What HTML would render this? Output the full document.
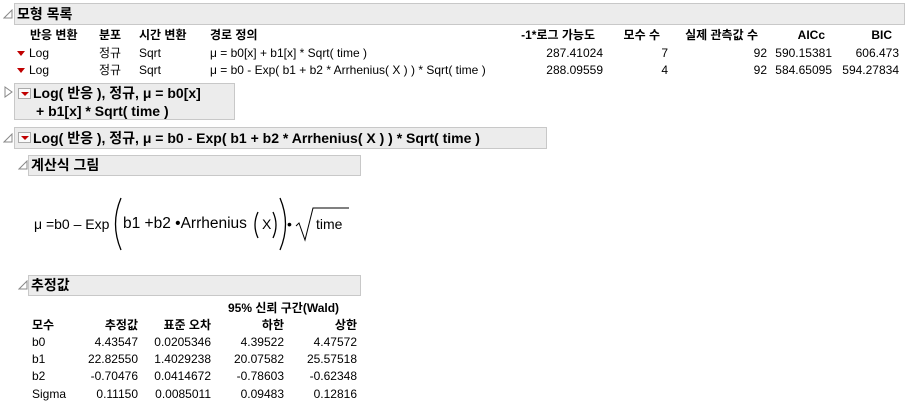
<!DOCTYPE html>
<html><head><meta charset="utf-8"><style>
body{margin:0;width:906px;height:404px;background:#fff;position:relative;overflow:hidden;font-family:"Liberation Sans","Noto Sans CJK KR",sans-serif;font-size:12px;color:#000}
.a{position:absolute;white-space:nowrap;line-height:14px}
.r{text-align:right}
.b{font-weight:bold}
.box{position:absolute;background:#ececec;border:1px solid #c8c8c8;box-sizing:border-box}
.h{font-size:14px;font-weight:bold;line-height:18px}
.tri{position:absolute;width:0;height:0;border-left:4px solid transparent;border-right:4px solid transparent;border-top:5px solid #c00000}
.dd{position:absolute;width:13px;height:11px;border:1px solid #aaa;background:#fafafa;box-sizing:border-box}
.dd:after{content:"";position:absolute;left:2px;top:3px;border-left:4px solid transparent;border-right:4px solid transparent;border-top:4px solid #c00000}
.f{position:absolute;white-space:nowrap;font-size:14px;line-height:18px;top:215px}
</style></head><body>
<svg class="a" style="left:3px;top:9px" width="10" height="10"><path d="M9 1 L9 9 L1 9 Z" fill="none" stroke="#888"/></svg>
<div class="box" style="left:14px;top:3px;width:891px;height:22px"></div>
<span class="a h" style="left:17px;top:5px">모형 목록</span>
<span class="a b" style="left:30px;top:28px">반응 변환</span>
<span class="a b" style="left:99px;top:28px">분포</span>
<span class="a b" style="left:139px;top:28px">시간 변환</span>
<span class="a b" style="left:210px;top:28px">경로 정의</span>
<span class="a b r" style="right:311px;top:28px">-1*로그 가능도</span>
<span class="a b r" style="right:246px;top:28px">모수 수</span>
<span class="a b r" style="right:148px;top:28px">실제 관측값 수</span>
<span class="a b r" style="right:81px;top:28px">AICc</span>
<span class="a b r" style="right:14px;top:28px">BIC</span>
<div class="tri" style="left:17px;top:51px"></div>
<span class="a" style="left:29px;top:46px">Log</span><span class="a" style="left:99px;top:46px">정규</span><span class="a" style="left:139px;top:46px">Sqrt</span><span class="a" style="left:210px;top:46px">μ = b0[x] + b1[x] * Sqrt( time )</span>
<span class="a r" style="right:303px;top:46px">287.41024</span><span class="a r" style="right:238px;top:46px">7</span><span class="a r" style="right:139px;top:46px">92</span><span class="a r" style="right:74px;top:46px">590.15381</span><span class="a r" style="right:7px;top:46px">606.473</span>
<div class="tri" style="left:17px;top:68px"></div>
<span class="a" style="left:29px;top:63px">Log</span><span class="a" style="left:99px;top:63px">정규</span><span class="a" style="left:139px;top:63px">Sqrt</span><span class="a" style="left:210px;top:63px">μ = b0 - Exp( b1 + b2 * Arrhenius( X ) ) * Sqrt( time )</span>
<span class="a r" style="right:303px;top:63px">288.09559</span><span class="a r" style="right:238px;top:63px">4</span><span class="a r" style="right:139px;top:63px">92</span><span class="a r" style="right:74px;top:63px">584.65095</span><span class="a r" style="right:7px;top:63px">594.27834</span>
<svg class="a" style="left:4px;top:86px" width="10" height="12"><path d="M1 1 L8 6 L1 11 Z" fill="none" stroke="#888"/></svg>
<div class="box" style="left:14px;top:83px;width:221px;height:37px"></div>
<div class="dd" style="left:18px;top:88px"></div>
<span class="a h" style="left:33px;top:84px">Log( 반응 ), 정규, μ = b0[x]</span>
<span class="a h" style="left:36px;top:102px">+ b1[x] * Sqrt( time )</span>
<svg class="a" style="left:3px;top:133px" width="10" height="10"><path d="M9 1 L9 9 L1 9 Z" fill="none" stroke="#888"/></svg>
<div class="box" style="left:14px;top:127px;width:533px;height:22px"></div>
<div class="dd" style="left:18px;top:132px"></div>
<span class="a h" style="left:33px;top:129px">Log( 반응 ), 정규, μ = b0 - Exp( b1 + b2 * Arrhenius( X ) ) * Sqrt( time )</span>
<svg class="a" style="left:18px;top:160px" width="10" height="10"><path d="M9 1 L9 9 L1 9 Z" fill="none" stroke="#888"/></svg>
<div class="box" style="left:28px;top:155px;width:333px;height:21px"></div>
<span class="a h" style="left:31px;top:156px">계산식 그림</span>
<div class="f" style="left:34px">μ =b0 – Exp</div>
<svg class="a" style="left:0;top:0" width="906" height="404"><g fill="none" stroke="#000" stroke-width="1.3">
<path d="M121 198 Q110 224 121 250"/><path d="M258 212 Q252 225 258 238"/><path d="M273 212 Q279 225 273 238"/><path d="M280 198 Q291 224 280 250"/>
<path d="M296 226 L299 223 L305 240 L313 208 L349 208" stroke-width="1"/></g></svg>
<div class="f" style="left:123px;font-size:15.5px">b1 +b2 •Arrhenius</div>
<div class="f" style="left:262px">X</div>
<div class="f" style="left:287px">•</div>
<div class="f" style="left:316px">time</div>
<svg class="a" style="left:18px;top:280px" width="10" height="10"><path d="M9 1 L9 9 L1 9 Z" fill="none" stroke="#888"/></svg>
<div class="box" style="left:28px;top:275px;width:333px;height:21px"></div>
<span class="a h" style="left:31px;top:276px">추정값</span>
<span class="a b" style="left:228px;top:301px">95% 신뢰 구간(Wald)</span>
<span class="a b" style="left:32px;top:318px">모수</span>
<span class="a b r" style="right:768px;top:318px">추정값</span>
<span class="a b r" style="right:695px;top:318px">표준 오차</span>
<span class="a b r" style="right:622px;top:318px">하한</span>
<span class="a b r" style="right:549px;top:318px">상한</span>
<span class="a" style="left:32px;top:335px">b0</span><span class="a r" style="right:768px;top:335px">4.43547</span><span class="a r" style="right:695px;top:335px">0.0205346</span><span class="a r" style="right:622px;top:335px">4.39522</span><span class="a r" style="right:549px;top:335px">4.47572</span>
<span class="a" style="left:32px;top:352px">b1</span><span class="a r" style="right:768px;top:352px">22.82550</span><span class="a r" style="right:695px;top:352px">1.4029238</span><span class="a r" style="right:622px;top:352px">20.07582</span><span class="a r" style="right:549px;top:352px">25.57518</span>
<span class="a" style="left:32px;top:369px">b2</span><span class="a r" style="right:768px;top:369px">-0.70476</span><span class="a r" style="right:695px;top:369px">0.0414672</span><span class="a r" style="right:622px;top:369px">-0.78603</span><span class="a r" style="right:549px;top:369px">-0.62348</span>
<span class="a" style="left:32px;top:387px">Sigma</span><span class="a r" style="right:768px;top:387px">0.11150</span><span class="a r" style="right:695px;top:387px">0.0085011</span><span class="a r" style="right:622px;top:387px">0.09483</span><span class="a r" style="right:549px;top:387px">0.12816</span>
</body></html>
